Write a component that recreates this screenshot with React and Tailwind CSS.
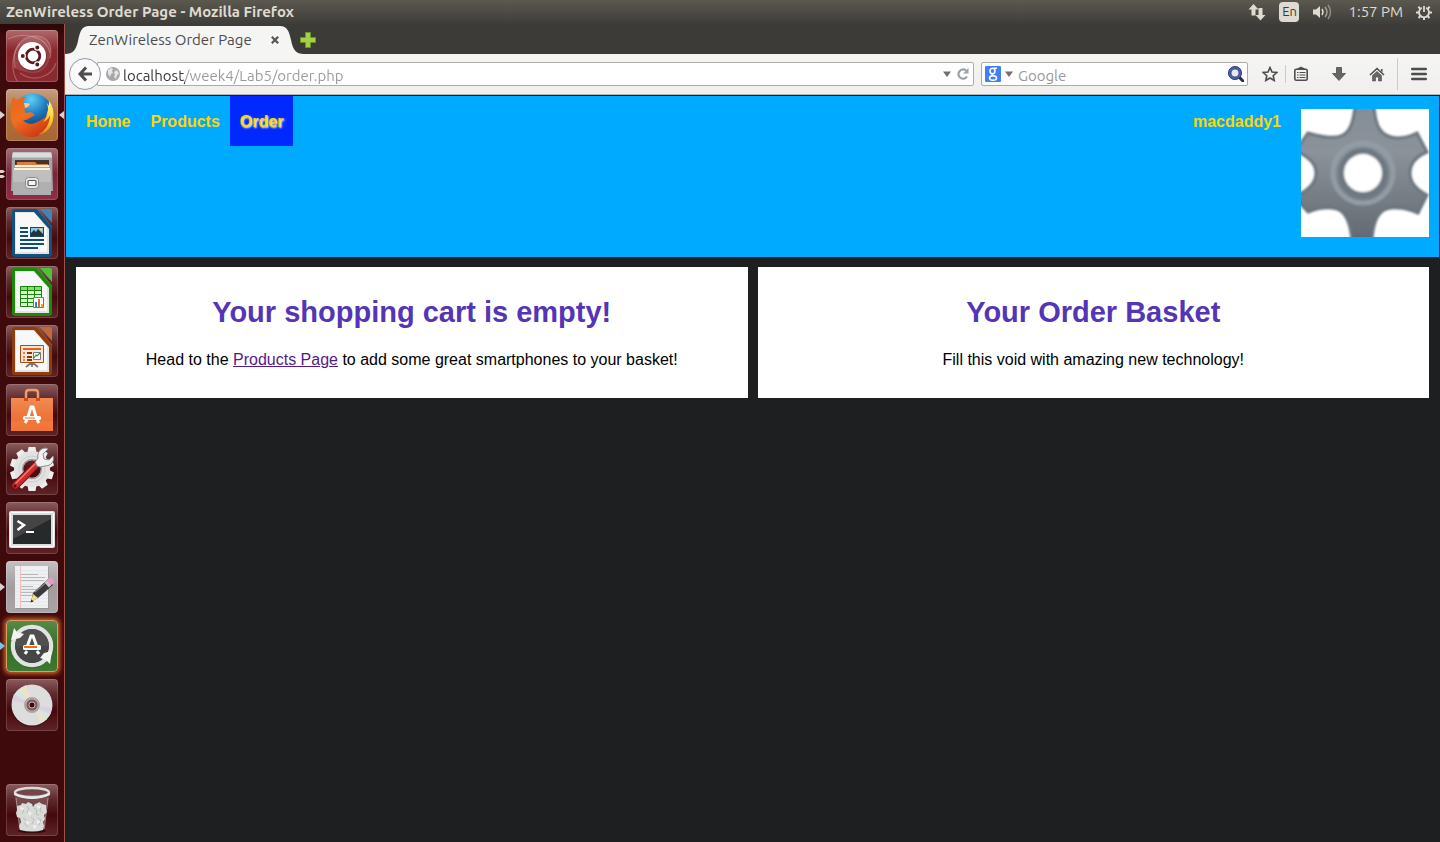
import React from "react";

const UbuntuLogo = () => (
  <>
    <g fill="none" stroke="#e9b9b9" strokeOpacity=".35" strokeWidth="1.2">
      <path d="M9 38C5 20 14 5 32 6c10 1 15 10 12 22" />
      <path d="M2 9c14-7 38-4 42 14M50 33c-4 14-22 20-36 10" />
      <path d="M12 52C4 42 6 22 14 14" />
    </g>
    <path d="M9 38C5 20 14 5 32 6c10 1 15 10 12 22-4 14-14 20-35 10z" fill="#fff" opacity=".12" />
    <circle cx="26.500" cy="27" r="14.500" fill="#5d1218" opacity=".4" />
    <circle cx="26" cy="26" r="14" fill="#fff" />
    <circle cx="27" cy="26" r="6.800" fill="none" stroke="#5a1a1e" strokeWidth="2.800" />
    <g fill="#5a1a1e" stroke="#fff" strokeWidth="1.200">
      <circle cx="16.800" cy="26" r="2.600" />
      <circle cx="31.300" cy="17.500" r="2.600" />
      <circle cx="31.300" cy="34.500" r="2.600" />
    </g>
  </>
);

const FirefoxLogo = () => (
  <>
    <defs>
      <radialGradient id="ffBlue" cx=".45" cy=".15" r=".8">
        <stop offset="0" stopColor="#5fd0f5" />
        <stop offset=".5" stopColor="#1f79bd" />
        <stop offset="1" stopColor="#0d2f6b" />
      </radialGradient>
      <linearGradient id="ffFox" x1="0" y1="0" x2=".6" y2="1">
        <stop offset="0" stopColor="#e8661b" />
        <stop offset=".5" stopColor="#ee7020" />
        <stop offset="1" stopColor="#cf3a14" />
      </linearGradient>
      <linearGradient id="ffTail" x1="0" y1="0" x2="0" y2="1">
        <stop offset="0" stopColor="#fff27a" />
        <stop offset=".6" stopColor="#fdc72d" />
        <stop offset="1" stopColor="#ee7a1c" />
      </linearGradient>
    </defs>
    <circle cx="27" cy="24" r="19.500" fill="url(#ffBlue)" />
    <path d="M43 12c7 9 6 23-3 30-3 2-6 3-8 3 5-5 8-11 8-18 1-3 2-5 2-7 1-3 1-5 1-8z" fill="url(#ffTail)" />
    <path d="M5 18c0-4 1-8 3-10 1 2 2 3 3 3 3-2 5-3 9-3-2 2-3 4-3 6 3 0 5 0 7 1-1 2-2 3-5 4-1 2 0 4 1 5 3-1 6-1 8 1 1 1 0 2-1 2-4 2-6 5-10 4 3 4 9 5 14 2 5-2 9-5 11-9l3 1c2 11-7 22-18 23C13 49 2 37 5 18z" fill="url(#ffFox)" />
    <path d="M18 14c3 0 5 0 6 1-1 2-2 3-5 4z" fill="#f7c7a0" />
    <path d="M41 14c3 9-1 16-4 19 3-1 5-3 7-7 0 9-5 16-12 20 12-2 18-15 13-26" fill="url(#ffTail)" />
  </>
);

const FilesLogo = () => (
  <>
    <path d="M6 6q0-2 2-2h36q2 0 2 2l1 37H5z" fill="#a6a6a6" />
    <path d="M7 4.500h38l1 5H6z" fill="#dcdcdc" />
    <path d="M9 12h34v12H9z" fill="#45322d" />
    <path d="M11 14h18l2 2h11v8H10z" fill="#e07a3c" />
    <path d="M9 17h34v2H9zM8 20h36v2H8z" fill="#fff0d8" />
    <path d="M9 19h34v1H9z" fill="#ed954f" />
    <path d="M7 22h38v25H7z" fill="#b0b0b0" />
    <path d="M7 22h38v12H7z" fill="#bfbfbf" />
    <rect x="19.500" y="29.500" width="13" height="11" rx="3" fill="#e5e5e5" stroke="#8e8e8e" />
    <rect x="22" y="32.500" width="8" height="5" rx="1" fill="#f5f5f5" stroke="#555" strokeWidth="1.200" />
  </>
);

const Sheet = ({ edge, corner, children }) => (
  <>
    <path d="M9 2h22l15 18v27q0 3-3 3H9q-3 0-3-3V5q0-3 3-3z" fill={edge} />
    <path d="M9 5h19l15 17v25H9z" fill="#e3e3e3" />
    <path d="M10 6h18l13 15v24H10z" fill="#f8f8f8" />
    <path d="M34 2h10q2 0 2 2v12z" fill={corner} />
    <path d="M31 2l15 18" stroke={corner} strokeWidth=".8" opacity=".7" />
    {children}
  </>
);

const WriterLogo = () => (
  <Sheet edge="#14507c" corner="#3d86b5">
    <path d="M14 20h8v2h-8zM14 24h8v2h-8zM14 28h8v2h-8zM14 32h24v2H14zM14 36h24v2H14zM14 40h18v2H14z" fill="#0f4c75" />
    <rect x="24.500" y="20.500" width="13" height="9" fill="#8cc3e6" stroke="#0f4c75" />
    <path d="M25 29v-3l3-3 2 2 2-3 5 5v2z" fill="#24323b" />
    <circle cx="35" cy="22.500" r="1.200" fill="#ffd93b" />
  </Sheet>
);

const CalcLogo = () => (
  <Sheet edge="#198a0a" corner="#4fc238">
    <path d="M14 20h22v21H14z" fill="#dff7d5" />
    <path d="M14 20h22v4H14z" fill="#8add6b" />
    <path d="M14.500 20.500h21v20h-21zM14 24.500h22M14 28.500h22M14 32.500h22M14 36.500h22M21.500 20v21M28.500 20v21" fill="none" stroke="#168708" />
    <path d="M27.500 31.500h10v10h-10z" fill="#fff" stroke="#6c7a86" />
    <path d="M29 36h2v5h-2z" fill="#1f8ae0" />
    <path d="M32 33h2v8h-2z" fill="#e0682a" />
    <path d="M35 38h2v3h-2z" fill="#e8b500" />
  </Sheet>
);

const ImpressLogo = () => (
  <Sheet edge="#8f3d0e" corner="#c2693c">
    <path d="M26 38v4M25 38l-5 4M27 38l5 4" stroke="#777" strokeWidth="1.800" />
    <path d="M14.500 20.500h23v17h-23z" fill="#fbe6d5" stroke="#b04a12" />
    <path d="M17 23h18v2H17z" fill="#d7652a" />
    <path d="M17 27h2v2h-2zM17 31h2v2h-2zM17 34h2v2h-2z" fill="#e0804c" />
    <path d="M21 27h5v2h-5zM21 31h5v2h-5zM21 34h5v2h-5z" fill="#8b3409" />
    <path d="M27.500 27.500h7v7h-7z" fill="#fff" stroke="#777" />
    <path d="M28 33l2-3 1 1 3-3" fill="none" stroke="#2f9a25" strokeWidth="1.200" />
  </Sheet>
);

const SoftwareLogo = () => (
  <>
    <defs>
      <linearGradient id="bag" x1="0" y1="0" x2="0" y2="1">
        <stop offset="0" stopColor="#f28a52" />
        <stop offset="1" stopColor="#ea6524" />
      </linearGradient>
    </defs>
    <path d="M5 14h42v33H5z" fill="url(#bag)" />
    <path d="M5 37h42v10H5z" fill="#f7854b" opacity=".45" />
    <path d="M20 18V9q0-3 3-3h6q3 0 3 3v9" fill="none" stroke="#f39a6a" strokeWidth="2.500" />
    <path d="M18 14h4v3h-4zM30 14h4v3h-4z" fill="#c9501c" />
    <path d="M22 33L25 23h2l3 10M19 39l2-3M33 39l-2-3" fill="none" stroke="#fff" strokeWidth="3" />
    <rect x="17" y="32" width="18" height="4" rx="1.500" fill="#fff" />
    <path d="M19 33.500h10v1H19z" fill="#ed6f30" />
  </>
);

const teeth = [0, 36, 72, 108, 144, 180, 216, 252, 288, 324];
const SettingsLogo = () => (
  <>
    <g fill="#ededed">
      {teeth.map((a) => (
        <path key={a} d="M21 13l1.500-9h7L31 13z" transform={`rotate(${a} 26 26)`} />
      ))}
    </g>
    <circle cx="26" cy="26" r="13.500" fill="none" stroke="#e2e2e2" strokeWidth="9" />
    <circle cx="26" cy="26" r="13" fill="none" stroke="#cfcfcf" />
    <circle cx="26" cy="26" r="9.500" fill="none" stroke="#a99ea0" strokeWidth="1.500" />
    <path d="M9 43L31 21" stroke="#7c0c10" strokeWidth="8" strokeLinecap="round" />
    <path d="M9.500 42.500L31 21" stroke="#cf2a2e" strokeWidth="6" strokeLinecap="round" />
    <path d="M10 40L29 21" stroke="#f2797a" strokeWidth="1.500" strokeLinecap="round" />
    <circle cx="9" cy="43" r="1.500" fill="#540a0b" />
    <path d="M29 19l3-4c-1-5 2-10 8-10l2 1-5 5 1 5 5 1 4-4c2 5-2 10-8 10l-5 1-3-1z" fill="#f1f1f1" stroke="#8b8b8b" />
  </>
);

const TerminalLogo = () => (
  <>
    <rect x="3" y="9" width="46" height="37" rx="2" fill="#dedede" />
    <rect x="4.500" y="10.500" width="43" height="34" rx="1" fill="none" stroke="#fff" />
    <path d="M7 13h38v29H7z" fill="#262a2a" />
    <path d="M7 13h38v4L7 37z" fill="#50504f" opacity=".7" />
    <path d="M11.500 19l6.500 4-6.500 5" fill="none" stroke="#fff" strokeWidth="2.500" />
    <path d="M20 29h8v2h-8z" fill="#fff" />
  </>
);

const EditorLogo = () => (
  <>
    <path d="M10 6h33v42H10z" fill="#8f8c8e" opacity=".6" />
    <path d="M9 5h33v42H9z" fill="#f0f0f0" />
    <path d="M9 9.500h33M9 13h33M9 16.500h33M9 20h33M9 23.500h33M9 27h33M9 30.500h33M9 34h33M9 37.500h33M9 41h33M9 44.500h33" stroke="#d8e2ee" strokeWidth=".6" />
    <path d="M14.500 5v42" stroke="#f0bdbd" />
    <path d="M15 13.500h17M15 16.500h24M15 19.500h23M15 25.500h12M15 28.500h21M15 31.500h20M15 34.500h16M15 40.500h10" stroke="#a9a9a9" strokeWidth=".8" />
    <path d="M25 41l2-9 15-14 5 6-15 13z" fill="#3a3a3a" />
    <path d="M29 31l14-12" stroke="#7d7d7d" strokeWidth="1.500" />
    <path d="M40 20l3-3q2-1 4 1t1 4l-4 3z" fill="#e59ac8" />
    <path d="M38.500 21.500l2-2 4.500 5-2 2z" fill="#c9c9c9" />
    <path d="M25 41l2-8 5 4z" fill="#f3dd86" />
    <path d="M24.500 41.500l1-3 2 2z" fill="#222" />
  </>
);

const UpdaterLogo = () => (
  <>
    <circle cx="26" cy="28" r="20" fill="#1a3c14" opacity=".35" />
    <circle cx="26" cy="26" r="19" fill="none" stroke="#e2e2e2" strokeWidth="4.500" />
    <circle cx="26" cy="26" r="17" fill="#464646" />
    <path d="M26 9a17 17 0 0 1 17 17H9A17 17 0 0 1 26 9z" fill="#5a5a5a" opacity=".5" />
    <path d="M5 20l3-12 3 4 7 2-4 4z" fill="#f3f3f3" />
    <path d="M46 31l-2 13-4-4-6-2 4-5z" fill="#f3f3f3" />
    <path d="M21 27l4-11h2l4 11M19 34l2-3M33 34l-2-3" fill="none" stroke="#fff" strokeWidth="3" />
    <rect x="17" y="25" width="18" height="5" rx="1.500" fill="#fff" />
    <path d="M18 26h13v2H18z" fill="#ef6a22" />
  </>
);

const DiscLogo = () => (
  <>
    <circle cx="26" cy="27" r="21" fill="#2c0709" opacity=".5" />
    <circle cx="26" cy="26" r="20.500" fill="#dedddd" />
    <path d="M26 26L8 16q3-5 8-8zM26 26l19 8q-3 6-8 9z" fill="#d3e5e0" />
    <path d="M26 26L12 11l8-5zM26 26l15 14-6 4z" fill="#ebe2cc" />
    <path d="M26 26L6 22l2-7zM26 26l20 3-2 6z" fill="#dcd0e0" />
    <circle cx="26" cy="26" r="8" fill="#b2a3a5" />
    <circle cx="26" cy="26" r="5.500" fill="#7a5a5d" />
    <circle cx="26" cy="26" r="3" fill="#3d0a0c" stroke="#e3d9da" strokeWidth=".8" />
  </>
);

const TrashLogo = () => (
  <>
    <ellipse cx="26" cy="47" rx="14" ry="2" fill="#210405" opacity=".7" />
    <path d="M9 10h34l-4 35q-13 4-26 0z" fill="#c9b9b9" opacity=".25" />
    <path d="M11 22l4-1 1-2 4 1 2-2 4 2 1 3 2-3 3-1 1-1 3 2 4 1v4l1 3-3 3 1 4-2 3 1 4-1 4q-10 3-23 0l-1-4 2-4-1-4-3-1-1-4 1-3z" fill="#d9dbd8" />
    <path d="M15 25l3 2-2 3M21 22l2 3-2 3 3 2M28 24l3 2-1 4 3 1M35 23l-1 4 3 2M17 34l3 2-1 4 3 3M25 33l3 3-2 4M32 34l3 2-2 5" fill="none" stroke="#b9bdb9" strokeWidth="1" />
    <path d="M14 23l4 1-2 3zM22 27l4 2-3 3zM31 21l4 2-3 2zM19 37l5 1-3 3zM31 36l4 2-4 2zM27 41l4 1-3 3z" fill="#f2f3f1" />
    <path d="M10 14l4 31M42 14l-4 31" stroke="#d9caca" strokeOpacity=".5" />
    <ellipse cx="26" cy="8.500" rx="17" ry="4.500" fill="#70474b" stroke="#dadada" strokeWidth="2.500" />
    <path d="M8 9q18 8 36 0v2q-18 8-36 0z" fill="#ececec" />
  </>
);

const plain = "border-white/15 bg-[linear-gradient(180deg,#8b5c5f_0%,#5f2b2f_28%,#45090d_60%,#5f2427_100%)]";
const apps = [
  { name: "Search your computer", Logo: UbuntuLogo, tile: "border-white/20 bg-[linear-gradient(180deg,#b06a6c_0%,#8a262d_40%,#8b2a30_100%)]" },
  { name: "Firefox Web Browser", Logo: FirefoxLogo, tile: "border-white/20 bg-[linear-gradient(180deg,#c4a085_0%,#b0713f_45%,#a96634_100%)]", left: 1, right: true },
  { name: "Files", Logo: FilesLogo, tile: "border-white/15 bg-[linear-gradient(180deg,#a07078_0%,#7a2438_50%,#8c3048_100%)]", left: 2 },
  { name: "LibreOffice Writer", Logo: WriterLogo, tile: plain },
  { name: "LibreOffice Calc", Logo: CalcLogo, tile: plain },
  { name: "LibreOffice Impress", Logo: ImpressLogo, tile: plain },
  { name: "Ubuntu Software Center", Logo: SoftwareLogo, tile: plain },
  { name: "System Settings", Logo: SettingsLogo, tile: plain },
  { name: "Terminal", Logo: TerminalLogo, tile: plain },
  { name: "Text Editor", Logo: EditorLogo, tile: "border-white/20 bg-[linear-gradient(180deg,#c4c0c2_0%,#a39c9f_50%,#aaa4a6_100%)]", left: 1 },
  { name: "Software Updater", Logo: UpdaterLogo, tile: "border-[#d9a065] bg-[linear-gradient(180deg,#5b8a4c_0%,#2f7024_50%,#3d7a33_100%)] shadow-[0_0_4px_2px_#d0622c]", left: 3 },
  { name: "Disc", Logo: DiscLogo, tile: plain },
];

function LauncherItem({ app }) {
  const { name, Logo, tile, left, right } = app;
  return (
    <button type="button" aria-label={name} className="relative flex h-13 w-full shrink-0 justify-center">
      <span className={`block h-13 w-13 overflow-hidden rounded border bg-origin-border ${tile}`}>
        <svg viewBox="1 1 50 50" className="size-full"><Logo /></svg>
      </span>
      {left && (
        <svg viewBox="0 0 5 8" className="absolute left-0 top-[22px] h-2 w-[5px]">
          {left === 2 ? <path d="M0 0h3l2 1.500L3 3H0zM0 5h3l2 1.500L3 8H0z" fill="#d9d0d0" /> : <path d="M0 0l5 4-5 4z" fill={left === 3 ? "#77c4ea" : "#d9d0d0"} />}
        </svg>
      )}
      {right && (
        <svg viewBox="0 0 5 8" className="absolute right-0 top-[22px] h-2 w-[5px]"><path d="M5 0L0 4l5 4z" fill="#d9d0d0" /></svg>
      )}
    </button>
  );
}

function SystemBar() {
  return (
    <header className="flex h-6 shrink-0 items-center justify-between bg-[linear-gradient(180deg,#5b584f_0%,#3e3d39_100%)] pl-1.5 pr-2 text-[15px] text-[#dfdbd2]">
      <span className="font-bold">ZenWireless Order Page - Mozilla Firefox</span>
      <div className="flex items-center gap-[13px]">
        <button type="button" aria-label="Network">
          <svg viewBox="0 0 18 18" className="size-[18px]" fill="#dfdbd2"><path d="M5.500 1L10.500 6.500H7.500v6h-4v-6H.500zM12.500 17.500L17.500 12h-3V5h-4v7h-3z" /></svg>
        </button>
        <button type="button" className="h-5 w-5 rounded-sm bg-[#dfdbd2] text-[13px] text-[#3c3b37]">En</button>
        <button type="button" aria-label="Sound">
          <svg viewBox="0 0 20 18" className="h-[18px] w-5" fill="none" stroke="#dfdbd2" strokeWidth="1.500">
            <path d="M1 6.500h3L8 3v12l-4-3.500H1z" fill="#dfdbd2" stroke="none" />
            <path d="M10 6q2 3 0 6" /><path d="M13 4q4 5 0 10" opacity=".6" /><path d="M16 2q5 7 0 14" opacity=".45" />
          </svg>
        </button>
        <span className="pl-[3px]">1:57 PM</span>
        <button type="button" aria-label="System">
          <svg viewBox="0 0 16 16" className="size-4" fill="none" stroke="#dfdbd2">
            <path d="M5.800 3.800a5 5 0 1 0 4.400 0M8 2v6" strokeWidth="1.800" />
            <path d="M0 8.500h3M13 8.500h3M8 13v3M2.300 2.800l2 2M13.700 2.800l-2 2M2.500 14l2-2M13.500 14l-2-2" strokeWidth="2" />
          </svg>
        </button>
      </div>
    </header>
  );
}

function TabStrip() {
  return (
    <div className="flex h-[30px] items-end bg-[#3c3b37]">
      <div className="flex h-7 items-stretch">
        <svg viewBox="0 0 24 28" className="h-7 w-6"><path d="M0 28C8 28 11 24 13 15 15 5 17 0 24 0V28z" fill="#f5f5f4" /></svg>
        <div className="flex w-[191px] items-center justify-between bg-[#f5f5f4] pr-px text-[#4c4c4c]">
          <span className="text-[15px]">ZenWireless Order Page</span>
          <button type="button" aria-label="Close tab">
            <svg viewBox="0 0 8 8" className="size-2" stroke="#555" strokeWidth="2.200"><path d="M.8.8l6.400 6.400M7.200.8L.8 7.200" /></svg>
          </button>
        </div>
        <svg viewBox="0 0 24 28" className="h-7 w-6"><path d="M0 0C7 0 9 5 11 14 13 24 16 28 24 28H0z" fill="#f5f5f4" /></svg>
      </div>
      <button type="button" aria-label="New tab" className="-ml-1 mb-1.5">
        <svg viewBox="0 0 16 16" className="size-4"><path d="M5.500.5h5v5h5v5h-5v5h-5v-5h-5v-5h5z" fill="#a6cf46" stroke="#649a1d" /></svg>
      </button>
    </div>
  );
}

const Caret = () => <svg viewBox="0 0 8 6" className="h-1.5 w-2" fill="#707070"><path d="M0 .5h8L4 6z" /></svg>;

function Toolbar() {
  return (
    <div className="flex h-[41px] items-center border-b border-[#b8b4ad] bg-[linear-gradient(180deg,#f5f5f4_0%,#f0efee_100%)] pl-1 pr-[13px]">
      <button type="button" aria-label="Back" className="z-10 flex size-8 shrink-0 items-center justify-center rounded-full border border-[#8f9aa8] bg-[#fafafa]">
        <svg viewBox="0 0 16 16" className="size-4" fill="none" stroke="#4d4d4d" strokeWidth="3"><path d="M9 1.500L3 8l6 6.500M3 8h12" /></svg>
      </button>
      <div className="-ml-1 flex h-6 min-w-0 grow items-center rounded-r-xs border border-[#b0aca5] bg-white pl-2 pr-1">
        <svg viewBox="0 0 14 14" className="size-3.5 shrink-0">
          <circle cx="7" cy="7" r="7" fill="#a6a6a6" />
          <path d="M2 3l3-2 2 1-1 2 1 2-2 1-1 3-2-3zM8 5l3-2 2 4-2 1-1 4-2-2 1-2z" fill="#e6e6e6" />
        </svg>
        <input aria-label="Address" defaultValue="localhost/week4/Lab5/order.php" className="ml-[3px] h-full min-w-0 grow bg-[linear-gradient(90deg,#333_62px,#999_62px)] bg-clip-text pt-0.5 text-[15px] text-transparent caret-black outline-none" />
        <button type="button" aria-label="History" className="mr-1.5"><Caret /></button>
        <button type="button" aria-label="Reload">
          <svg viewBox="0 0 12 12" className="size-3" fill="none" stroke="#98a2aa" strokeWidth="2.200"><path d="M10 8.500A4.600 4.600 0 1 1 9 2.500" /><path d="M11.500 0v5.500H6z" fill="#98a2aa" stroke="none" /></svg>
        </button>
      </div>
      <div className="ml-[7px] flex h-6 w-[267px] shrink-0 items-center rounded-xs border border-[#b0aca5] bg-white px-[3px]">
        <button type="button" aria-label="Search engine" className="flex items-center gap-1">
          <svg viewBox="0 0 16 16" className="size-4">
            <rect width="16" height="16" rx="1" fill="#4080f5" />
            <g fill="none" stroke="#fff" strokeWidth="1.500"><ellipse cx="7.500" cy="5" rx="2.500" ry="2.800" /><ellipse cx="8" cy="12" rx="3.500" ry="2.300" /><path d="M9 2.200h3M7.500 7.800Q6 9 9 9.800" /></g>
          </svg>
          <Caret />
        </button>
        <input aria-label="Search" placeholder="Google" className="ml-[5px] h-full min-w-0 grow pt-0.5 text-[15px] outline-none placeholder:text-[#999]" />
        <button type="button" aria-label="Go">
          <svg viewBox="0 0 16 16" className="size-4"><path d="M11 11l4 4" stroke="#2b2b2b" strokeWidth="3" strokeLinecap="round" /><circle cx="7" cy="7" r="5.300" fill="#e4e9f6" stroke="#4660ae" strokeWidth="2.600" /><circle cx="7" cy="7" r="6.600" fill="none" stroke="#1f2c5d" strokeWidth=".8" /><circle cx="7" cy="7" r="4" fill="none" stroke="#1f2c5d" strokeWidth=".6" /></svg>
        </button>
      </div>
      <div className="ml-3.5 flex shrink-0 items-center">
        <button type="button" aria-label="Bookmark">
          <svg viewBox="0 0 16 16" className="size-4" fill="none" stroke="#4d4d4d" strokeWidth="1.600"><path d="M8 1.500l2 4.500 4.800.5-3.600 3.200 1 4.800L8 12l-4.200 2.500 1-4.800L1.200 6.500 6 6z" /></svg>
        </button>
        <span className="mx-[7px] h-[18px] w-px bg-[#c6ccd2]" />
        <button type="button" aria-label="Reading list">
          <svg viewBox="0 0 16 16" className="size-4" fill="none" stroke="#4d4d4d"><rect x="1.800" y="3.300" width="12.400" height="10.900" rx="1.500" strokeWidth="1.600" /><path d="M5 3.500V2.200h1.500a1.500 1 0 0 1 3 0H11v1.300z" fill="#4d4d4d" /><path d="M4 6.500h1.500M6.500 6.500H12.500M4 9h1.500M6.500 9H12.500M4 11.500h1.500M6.500 11.500H12.500" /></svg>
        </button>
        <button type="button" aria-label="Downloads" className="ml-[22px]">
          <svg viewBox="0 0 16 16" className="size-4" fill="#666" stroke="#4d4d4d" strokeWidth=".8"><path d="M5.500 1.500h5v6h4L8 14.500l-6.500-7h4z" /></svg>
        </button>
        <button type="button" aria-label="Home page" className="ml-[22px]">
          <svg viewBox="0 0 16 16" className="size-4"><path d="M1 9l7-6.500L15 9" fill="none" stroke="#4d4d4d" strokeWidth="1.600" /><path d="M12 3h1.500v3.500L12 5z" fill="#4d4d4d" /><path d="M3.500 9.500L8 5.400l4.500 4.100V15H9.500v-4h-3v4h-3z" fill="#666" stroke="#4d4d4d" strokeWidth=".6" /></svg>
        </button>
        <span className="ml-3 mr-[13px] h-8 w-px bg-[#c6ccd2]" />
        <button type="button" aria-label="Menu">
          <svg viewBox="0 0 16 14" className="h-3.5 w-4" stroke="#4d4d4d" strokeWidth="2.400" strokeLinecap="round"><path d="M1.200 2h13.600M1.200 7h13.600M1.200 12h13.600" /></svg>
        </button>
      </div>
    </div>
  );
}

function Card({ title, children }) {
  return (
    <section className="grow basis-0 bg-white px-2.5 py-7 text-center">
      <h1 className="text-[29px] font-bold leading-[34px] text-[#5435b5]">{title}</h1>
      <p className="mt-[21px] text-base leading-5 text-black">{children}</p>
    </section>
  );
}

function OrderPage() {
  return (
    <div className="grow border-t border-[#1e1f21] bg-[#1e1f21] font-['Liberation_Sans',Arial,sans-serif]">
      <div className="mx-px flex items-start justify-between bg-[#00aaff] px-2.5 pb-5 font-bold text-[#ffd500]">
        <nav className="flex leading-[48px]">
          <a href="#home" className="px-2.5 pt-0.5">Home</a>
          <a href="#products" className="px-2.5 pt-0.5">Products</a>
          <a href="#order" className="bg-[#0029ff] px-2.5 pt-0.5 [text-shadow:1px_1px_2px_#fff]">Order</a>
        </nav>
        <div className="flex items-start">
          <a href="#account" className="px-2.5 pt-0.5 leading-[48px]">macdaddy1</a>
          <a href="#settings" aria-label="Settings" className="ml-2.5 mt-[13px] block bg-white">
            <svg viewBox="0 0 128 128" className="size-32">
              <defs>
                <linearGradient id="gear" x1="0" y1="0" x2="0" y2="1">
                  <stop offset="0" stopColor="#858d96" /><stop offset=".35" stopColor="#8b929a" /><stop offset="1" stopColor="#626971" />
                </linearGradient>
                <filter id="soft"><feGaussianBlur stdDeviation="1" /></filter>
              </defs>
              <g filter="url(#soft)">
                <path d="M54-4C53 10 50 22 42 26 32 31 18 27 7 24L-3 38V43C10 49 15 56 15 64S9 80-3 86v6L7 103c5-2 10-4 16-4 14-1 25 1 28 32h20c2-30 13-33 26-32 8 0 13 2 20 5l9-18C114 80 109 73 109 64s5-16 17-21L116 24c-8 4-14 5-20 5C80 28 74 18 73-4z" fill="url(#gear)" stroke="#69747e" strokeWidth="3" />
                <circle cx="62" cy="64" r="30" fill="none" stroke="#929ca6" strokeWidth="5" />
                <circle cx="62" cy="64" r="22" fill="#fff" stroke="#6d7882" strokeWidth="6" />
              </g>
            </svg>
          </a>
        </div>
      </div>
      <main className="flex gap-2.5 px-[11px] py-2.5">
        <Card title="Your shopping cart is empty!">
          Head to the <a href="#products" className="text-[#551a8b] underline">Products Page</a> to add some great smartphones to your basket!
        </Card>
        <Card title="Your Order Basket">Fill this void with amazing new technology!</Card>
      </main>
    </div>
  );
}

export default function App() {
  return (
    <div className="flex min-h-screen flex-col bg-[#1e1f21] font-['Ubuntu','Noto_Sans',sans-serif]">
      <SystemBar />
      <div className="flex grow">
        <aside className="flex w-[65px] shrink-0 flex-col gap-[7px] border-r border-[#a2504c] bg-[linear-gradient(180deg,#2a0808_0px,#3f0a0c_14px)] pb-1.5 pt-1.5">
          {apps.map((app) => <LauncherItem key={app.name} app={app} />)}
          <div className="mt-auto">
            <LauncherItem app={{ name: "Trash", Logo: TrashLogo, tile: plain }} />
          </div>
        </aside>
        <div className="flex min-w-0 grow flex-col">
          <TabStrip />
          <Toolbar />
          <OrderPage />
        </div>
      </div>
    </div>
  );
}
